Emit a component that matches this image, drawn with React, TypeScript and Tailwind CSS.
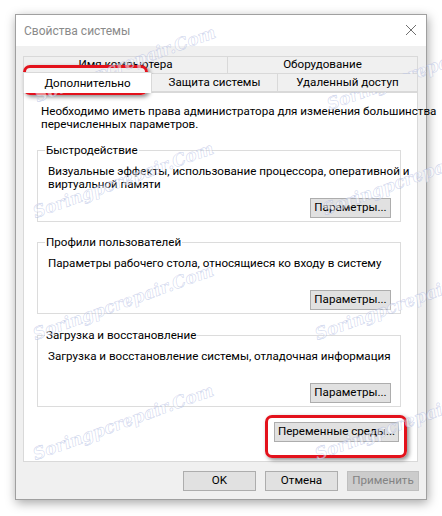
import React from 'react';

const marks = [
  { left: 30, top: 52 },
  { left: 322, top: 60 },
  { left: 28, top: 168 },
  { left: 318, top: 165 },
  { left: 28, top: 290 },
  { left: 310, top: 290 },
  { left: 28, top: 410 },
  { left: 310, top: 410 },
];

function Button({ label, className = '' }: { label: string; className?: string }) {
  return (
    <div
      className={`flex items-center justify-center h-[20px] border border-[#adadad] bg-[#e1e1e1] text-black whitespace-nowrap ${className}`}
    >
      {label}
    </div>
  );
}

function Group({ title, lines, className = '' }: { title: string; lines: string[]; className?: string }) {
  return (
    <fieldset className={`min-w-0 w-full border border-[#dcdcdc] h-[78px] px-[10px] ${className}`}>
      <legend className="ml-[-3px] px-[1px] leading-[13px]">{title}</legend>
      <div className="h-[26px] mt-[8px] leading-[13px] whitespace-nowrap">
        {lines.map((l) => (
          <div key={l}>{l}</div>
        ))}
      </div>
      <div className="flex justify-end mt-[7px] -mr-[1px]">
        <Button label="Параметры..." className="w-[81px] h-[19px]" />
      </div>
    </fieldset>
  );
}

export default function App() {
  return (
    <div className="relative w-[442px] h-[516px] bg-white pt-[14px] pl-[15px] overflow-hidden text-[11.6px] text-black font-['Roboto',sans-serif]">
      {/* Window */}
      <div className="w-[412px] h-[486px] border border-[#a0a0a0] bg-[#f0f0f0] shadow-[1px_3px_10px_rgba(0,0,0,0.35)]">
        {/* Title bar */}
        <div className="h-[31px] bg-white flex items-center justify-between pl-[8px] pr-[9px]">
          <span className="text-[#8a8a8a] text-[12px]">Свойства системы</span>
          <svg width="12" height="12" viewBox="0 0 12 12" className="mt-[-2px]">
            <path d="M1 1 L11 11 M11 1 L1 11" stroke="#707070" strokeWidth="1" />
          </svg>
        </div>

        {/* Body */}
        <div className="pl-[7px] pr-[8px] pt-[10px]">
          {/* Tabs */}
          <div className="flex h-[18px]">
            <div className="w-[205px] border border-[#d9d9d9] bg-[#f0f0f0] flex items-center justify-center">
              Имя компьютера
            </div>
            <div className="flex-1 border border-l-0 border-[#d9d9d9] bg-[#f0f0f0] flex items-center justify-center">
              Оборудование
            </div>
          </div>
          <div className="flex h-[18px] relative z-10">
            <div className="w-[129px] h-[21px] -mt-[2px] border border-b-0 border-[#d9d9d9] bg-white flex items-center justify-center pt-[1px]">
              Дополнительно
            </div>
            <div className="w-[126px] border border-l-0 border-t-0 border-[#d9d9d9] bg-[#f0f0f0] flex items-center justify-center">
              Защита системы
            </div>
            <div className="flex-1 border border-l-0 border-t-0 border-[#d9d9d9] bg-[#f0f0f0] flex items-center justify-center">
              Удаленный доступ
            </div>
          </div>

          {/* Panel */}
          <div className="h-[370px] border border-[#d9d9d9] bg-white pl-[13px] pr-[16px]">
            <div className="pt-[12px] pl-[4px] leading-[13px] whitespace-nowrap">
              <div>Необходимо иметь права администратора для изменения большинства</div>
              <div>перечисленных параметров.</div>
            </div>
            <div className="mt-[13px] flex flex-col">
              <Group
                title="Быстродействие"
                className="mb-[14px]"
                lines={['Визуальные эффекты, использование процессора, оперативной и', 'виртуальной памяти']}
              />
              <Group
                title="Профили пользователей"
                className="mb-[15px]"
                lines={['Параметры рабочего стола, относящиеся ко входу в систему']}
              />
              <Group
                title="Загрузка и восстановление"
                lines={['Загрузка и восстановление системы, отладочная информация']}
              />
            </div>
            <div className="flex justify-end mt-[15px] mr-[2px]">
              <Button label="Переменные среды..." className="w-[125px]" />
            </div>
          </div>

          {/* Dialog buttons */}
          <div className="flex justify-end gap-[9px] mt-[9px] -mr-[1px]">
            <Button label="OK" className="w-[73px]" />
            <Button label="Отмена" className="w-[73px]" />
            <div className="flex items-center justify-center h-[20px] w-[72px] border border-[#bfbfbf] bg-[#cccccc] text-[#838383]">
              Применить
            </div>
          </div>
        </div>
      </div>

      {/* Highlight boxes */}
      <div className="absolute left-[23px] top-[65px] w-[125px] h-[30px] rounded-[7px] border-[3px] border-[#e3121c] shadow-[2px_2px_4px_rgba(0,0,0,0.45)]" />
      <div className="absolute left-[265px] top-[415px] w-[142px] h-[43px] rounded-[7px] border-[3px] border-[#e3121c] shadow-[2px_2px_4px_rgba(0,0,0,0.45)]" />

      {/* Watermarks */}
      {marks.map((m, i) => (
        <div
          key={i}
          className="absolute pointer-events-none -rotate-[20deg] whitespace-nowrap italic font-bold text-[17px] font-['DejaVu_Serif',serif] text-[rgba(255,255,255,0.5)] [-webkit-text-stroke:0.6px_rgba(150,165,215,0.45)]"
          style={{ left: m.left, top: m.top }}
        >
          Soringpcrepair.Com
        </div>
      ))}
    </div>
  );
}
